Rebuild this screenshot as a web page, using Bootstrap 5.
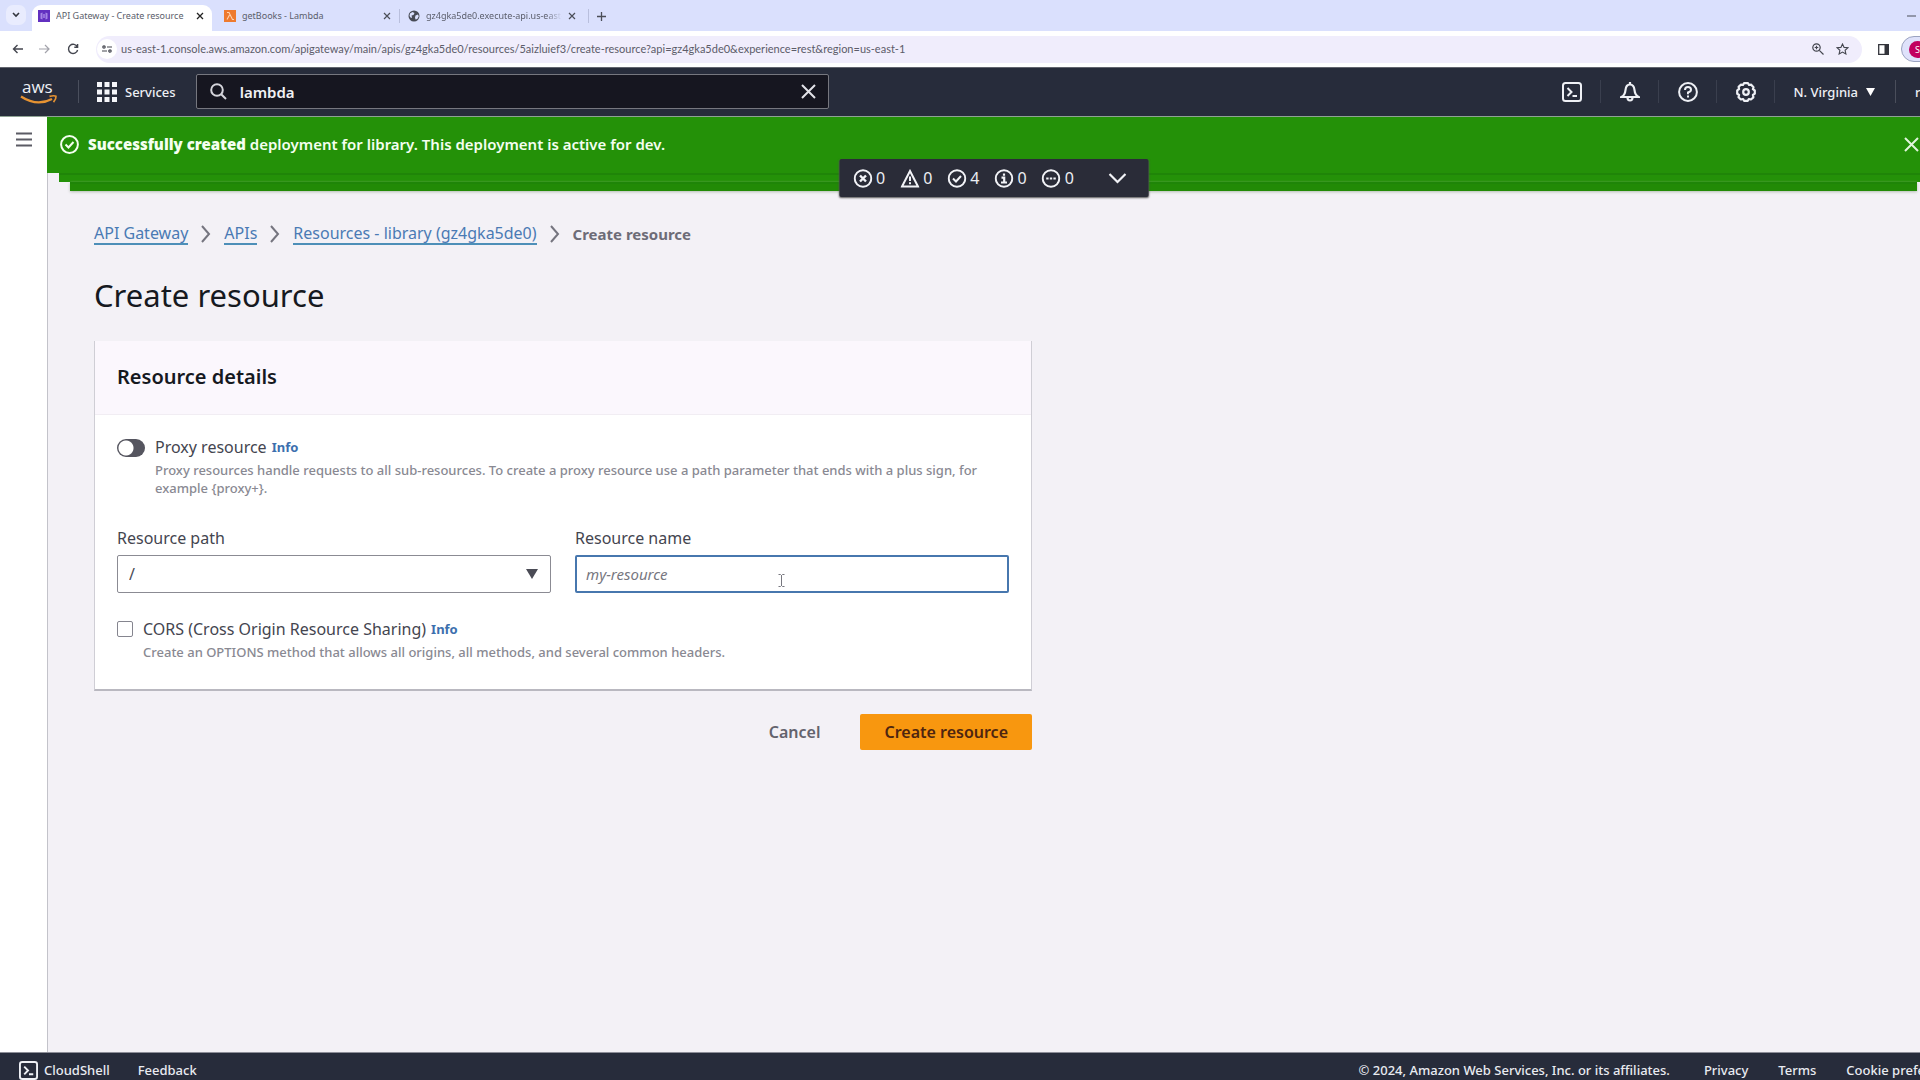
<!DOCTYPE html>
<html lang="en">
<head>
<meta charset="utf-8">
<meta name="viewport" content="width=device-width, initial-scale=1">
<title>API Gateway - Create resource</title>
<link href="https://cdn.jsdelivr.net/npm/bootstrap@5.3.0/dist/css/bootstrap.min.css" rel="stylesheet">
<style>
body { font-family: "Noto Sans", "Open Sans", sans-serif; background: #f3f1f6; color: #16191f; line-height: 20px; }
svg { display: block; flex: none; }
button { color: inherit; }
.icon-btn { background: none; border: 0; padding: 0; display: flex; align-items: center; justify-content: center; }

/* browser frame */
.tab-strip { height: 31px; background: #dae0fd; font-size: 9px; color: #5b5e6b; }
.tab-search { width: 20px; height: 20px; border-radius: 7px; background: #e9ecfe; margin: 5px 6px 0 6px; color: #33363f; }
.tab { height: 26px; margin-top: 5px; padding: 0 8px 4px 6px; gap: 6px; }
.tab a { color: inherit; text-decoration: none; overflow: hidden; white-space: nowrap; }
.tab-active { width: 180px; background: #fff; border-radius: 9px 9px 0 0; }
.tab-lambda { width: 187px; padding-left: 12px; }
.tab-exec { width: 184px; }
.tab-exec a { -webkit-mask-image: linear-gradient(90deg, #000 88%, transparent); mask-image: linear-gradient(90deg, #000 88%, transparent); }
.tab-sep { width: 1px; height: 14px; background: #b9bfdd; }
.tab-end { color: #4b4e58; margin-top: 1px; }
.url-bar { height: 36px; background: #fff; padding: 0 0 0 12px; color: #44464f; }
.url-tools { width: 84px; }
.url-pill { height: 27px; border-radius: 14px; background: #f0edfc; padding: 0 13px 0 1px; gap: 4px; }
.site-info { width: 20px; height: 20px; border-radius: 50%; background: #fff; }
.url-input { border: 0; background: none; outline: 0; padding: 0; font: 11px/20px Lato, sans-serif; color: #5c5c69; }
.profile { width: 32px; height: 26px; border-radius: 13px; border: 1px solid #9ba3c0; background: #dfe2fb; margin-right: -13px; padding-left: 7px; }
.profile span { width: 17px; height: 17px; border-radius: 50%; background: #c2005f; color: #fff; font-size: 9px; line-height: 17px; text-align: center; }

/* console header */
.console-nav { height: 50px; background: #272c3b; border-top: 1px solid #62656e; border-bottom: 1px solid #8fa394; color: #eef0f5; font-size: 13px; font-weight: 500; padding: 0 0 1px 21px; }
.nav-rule { width: 1px; height: 23px; background: #4a4f5d; margin-left: 20px; }
.nav-services { gap: 8px; margin-left: 18px; margin-right: 20px; font-weight: 500; }
.search-box { width: 33vw; height: 35px; background: #161620; border: 1px solid #76777f; border-radius: 2px; padding: 0 12px 0 13px; gap: 13px; }
.search-box input { border: 0; background: none; outline: 0; color: #f1f1f4; font-size: 15px; font-weight: 600; padding: 0; }
.nav-icon { width: 58px; height: 23px; border-right: 1px solid #3a3f4e; }
.nav-region { gap: 8px; padding: 0 20px 0 18px; height: 23px; border-right: 1px solid #4a4e5b; font-weight: 500; }
.nav-account { margin-left: 19px; margin-right: -55px; font-weight: 500; width: 60px; justify-content: flex-start; }

/* work area */
.side-rail { width: 48px; background: #fff; border-right: 1px solid #c3c3ca; padding-top: 15px; }
.work { margin-right: -20px; }
.flash-stack { margin-left: -1px; }
.flash { height: 56px; background: #249108; color: #f4fff0; font-size: 15px; font-weight: 600; padding: 0 21px 2px 13px; gap: 9px; }
.flash-under { height: 9px; background: #249108; border-top: 2px solid #1f8508; }
.under-1 { margin: 0 12px; }
.under-2 { margin: 0 23px; background: #228a06; box-shadow: 0 1px 3px #b4bfb2; }
.flash-count { left: 50%; top: 42px; transform: translateX(-50%); width: 309px; height: 38px; background: #2a2c38; color: #eceef3; border-radius: 2px; font-size: 16px; gap: 15px; padding: 0 22px 0 14px; box-shadow: 0 1px 2px #555; }
.flash-count span { gap: 4px; }

.page-body { padding: 32px 46px 0; }
.crumbs { font-size: 16px; gap: 13px; line-height: 20px; margin-bottom: 30px; }
.crumbs a { color: #4a7ab4; text-decoration: none; border-bottom: 2px solid #4d8fb8; }
.crumbs svg { color: #75757f; }
.crumbs .here { font-size: 15px; font-weight: 700; color: #6d6c77; }
.page-title { font-size: 31px; line-height: 40px; font-weight: 400; margin: 0 0 26px; }
.form-wrap { max-width: 938px; }
.panel { background: #fff; border-left: 1px solid #cfced5; border-right: 1px solid #cfced5; border-bottom: 2px solid #b9b8c0; }
.panel-head { height: 74px; background: #fbf7fd; border-bottom: 1px solid #f1edf3; padding: 0 22px 2px; }
.panel-head h2 { font-size: 20px; line-height: 24px; font-weight: 600; margin: 0; }
.panel-fields { padding: 21px 22px 28px; }
.field-label { font-size: 16px; line-height: 22px; color: #44454f; }
.info-link { font-size: 13px; font-weight: 700; color: #3c6fae; text-decoration: none; margin-left: 5px; }
.hint { font-size: 13px; line-height: 18px; font-weight: 500; color: #898992; margin: 3px 0 0; }
.form-switch .form-check-input.proxy-switch { width: 28px; height: 18px; margin: 3px 0 0; border: 0; border-radius: 9px; background: #55555f radial-gradient(circle at 9px 9px, #fff 7px, transparent 8px) no-repeat; }
input.form-check-input.cors-box { width: 16px; height: 16px; margin: 3px 0 0; border: 1px solid #85858f; border-radius: 2px; flex: none; }
.check-line { gap: 10px; }
.field-row { --bs-gutter-x: 24px; margin-top: 30px; }
.field-row .field-label { display: block; margin-bottom: 6px; }
.form-select.path-select, .form-control.name-input { height: 38px; font-size: 15px; line-height: 20px; border-radius: 2px; padding: 0 11px; color: #4a4b55; }
.form-select.path-select { border: 1px solid #8b8b93; background-image: none; font-size: 16px; }
.form-control.name-input { border: 2px solid #4777ae; box-shadow: none; padding: 0 9px; }
.name-input::placeholder { color: #77777f; font-style: italic; }
.select-arrow { right: 13px; top: 14px; pointer-events: none; }
.text-cursor { left: 203px; top: 19px; pointer-events: none; }
.cors-row { margin-top: 25px; }
.actions { margin-top: 23px; gap: 16px; }
.actions .btn { height: 36px; font-size: 16px; line-height: 20px; font-weight: 600; border: 0; border-radius: 2px; padding: 0 24px; }
.btn-plain { color: #63636d; }
.btn-create, .btn-create:hover { background: #f8970f; color: #4e2510; }

.console-foot { height: 37px; margin-bottom: -9px; background: #272c3b; border-top: 1px solid #8d8e98; color: #e9ebf1; font-size: 13px; font-weight: 500; padding: 0 0 2px 19px; }
.console-foot a, .console-foot button { color: inherit; text-decoration: none; white-space: nowrap; font-weight: 500; }
.console-foot button { gap: 6px; }
.foot-links { gap: 30px; margin-right: -46px; }
</style>
<script src="https://cdn.jsdelivr.net/npm/bootstrap@5.3.0/dist/js/bootstrap.bundle.min.js"></script>
</head>
<body class="vh-100 overflow-hidden d-flex flex-column">

<!-- tabs -->
<div class="tab-strip d-flex flex-shrink-0">
  <button class="icon-btn tab-search" aria-label="Search tabs"><svg width="8" height="6" viewBox="0 0 8 6" fill="none" stroke="currentColor" stroke-width="1.6"><path d="M1 1l3 3 3-3"/></svg></button>
  <div class="tab tab-active d-flex align-items-center">
    <svg width="12" height="12" viewBox="0 0 12 12"><rect width="12" height="12" fill="#6230c0"/><path d="M4.500 2.500L2.500 3.300v5.400l2 .8zM7.500 2.500l2 .8v5.400l-2 .8z" fill="#a685e6"/><path d="M5.500 4v4M6.500 4v4" fill="none" stroke="#b89aee" stroke-width=".6"/></svg>
    <a href="#" class="flex-grow-1">API Gateway - Create resource</a>
    <button class="icon-btn" aria-label="Close tab"><svg width="8" height="8" viewBox="0 0 8 8" stroke="#222" stroke-width="1.300"><path d="M1 1l6 6M7 1L1 7"/></svg></button>
  </div>
  <div class="tab tab-lambda d-flex align-items-center">
    <svg width="12" height="12" viewBox="0 0 12 12"><rect width="12" height="12" fill="#ee7a2e"/><path d="M3 2.500h2L8.500 9.500H10M5.500 5L3 9.500" fill="none" stroke="#ffd3b0" stroke-width="1.100"/></svg>
    <a href="#" class="flex-grow-1">getBooks - Lambda</a>
    <button class="icon-btn" aria-label="Close tab"><svg width="8" height="8" viewBox="0 0 8 8" stroke="#4b4e58" stroke-width="1.200"><path d="M1 1l6 6M7 1L1 7"/></svg></button>
  </div>
  <div class="d-flex align-items-center"><div class="tab-sep"></div></div>
  <div class="tab tab-exec d-flex align-items-center ps-2">
    <svg width="12" height="12" viewBox="0 0 12 12"><circle cx="6" cy="6" r="5.500" fill="#474a55"/><path d="M2 3.500l2.500-1.500 2 1-1 2-2 .5.5 2L3 8 1.500 6zM7.500 5.500l2.500-1 .8 1.800-1.500 2.700-1.800.5-.5-2z" fill="#dae0fd"/></svg>
    <a href="#" class="flex-grow-1">gz4gka5de0.execute-api.us-east-1.amazonaws.com</a>
    <button class="icon-btn" aria-label="Close tab"><svg width="8" height="8" viewBox="0 0 8 8" stroke="#4b4e58" stroke-width="1.200"><path d="M1 1l6 6M7 1L1 7"/></svg></button>
  </div>
  <div class="tab-end d-flex align-items-center flex-grow-1 gap-2">
    <div class="tab-sep ms-1"></div>
    <button class="icon-btn" aria-label="New tab"><svg width="9" height="9" viewBox="0 0 9 9" stroke="currentColor" stroke-width="1.300"><path d="M4.500 0v9M0 4.500h9"/></svg></button>
    <button class="icon-btn ms-auto me-1" aria-label="Minimize"><svg width="9" height="2" viewBox="0 0 9 2"><path d="M0 1h9" stroke="currentColor"/></svg></button>
  </div>
</div>

<!-- address bar -->
<div class="url-bar d-flex align-items-center flex-shrink-0">
  <div class="url-tools d-flex align-items-center gap-3">
    <button class="icon-btn" aria-label="Back"><svg width="11" height="10" viewBox="0 0 11 10" fill="none" stroke="currentColor" stroke-width="1.400"><path d="M11 5H1.500M5.500 1l-4 4 4 4"/></svg></button>
    <button class="icon-btn" aria-label="Forward"><svg width="12" height="10" viewBox="0 0 12 10" fill="none" stroke="#a3a3ab" stroke-width="1.200"><path d="M0 5h10M6 1l4 4-4 4"/></svg></button>
    <button class="icon-btn" aria-label="Reload"><svg width="12" height="12" viewBox="0 0 12 12" fill="none" stroke="currentColor" stroke-width="1.400"><path d="M10.300 4A4.600 4.600 0 1 0 10.600 7M10.600 1v3.300H7.300"/></svg></button>
  </div>
  <div class="url-pill d-flex align-items-center flex-grow-1">
    <button class="icon-btn site-info" aria-label="Site information"><svg width="10" height="8" viewBox="0 0 10 8" fill="none" stroke="currentColor" stroke-width="1.200"><circle cx="2" cy="2" r="1.200"/><path d="M5 2h5M0 6h5"/><circle cx="8" cy="6" r="1.200"/></svg></button>
    <input class="url-input flex-grow-1" type="text" aria-label="Address" value="us-east-1.console.aws.amazon.com/apigateway/main/apis/gz4gka5de0/resources/5aizluief3/create-resource?api=gz4gka5de0&amp;experience=rest&amp;region=us-east-1">
    <button class="icon-btn me-2" aria-label="Zoom"><svg width="12" height="12" viewBox="0 0 12 12" fill="none" stroke="currentColor" stroke-width="1.200"><circle cx="4.500" cy="4.500" r="3.700"/><path d="M7.300 7.300L11.500 11.500M2.700 4.500h3.600M4.500 2.700v3.600"/></svg></button>
    <button class="icon-btn" aria-label="Bookmark"><svg width="13" height="12" viewBox="0 0 13 12" fill="none" stroke="currentColor" stroke-width="1.100"><path d="M6.500 1l1.600 3.400 3.800.4-2.800 2.500.8 3.700-3.400-1.900L3.100 11l.8-3.700L1.100 4.800l3.800-.4z"/></svg></button>
  </div>
  <button class="icon-btn ms-3 me-2" aria-label="Side panel"><svg width="11" height="11" viewBox="0 0 11 11"><path d="M.7.700h9.600v9.600H.7z" fill="none" stroke="#33343b" stroke-width="1.300"/><path d="M6.500 0H11v11H6.500z" fill="#33343b"/></svg></button>
  <div class="profile d-flex align-items-center ms-1"><span>S</span></div>
</div>

<!-- console header -->
<header class="console-nav d-flex align-items-center flex-shrink-0">
  <a href="#" aria-label="AWS" class="text-decoration-none">
    <svg class="overflow-visible" width="37" height="26" viewBox="0 0 37 26" font-family="Open Sans, sans-serif"><text x="1" y="14" font-size="17" font-weight="500" fill="#eef0f5">aws</text><path d="M0 17.500Q16 28 31 20" fill="none" stroke="#e79332" stroke-width="2.300"/><path d="M28.500 17.400q4.500-1.200 6.500-.2.300 3-2.500 6" fill="none" stroke="#e79332" stroke-width="1.700"/></svg>
  </a>
  <div class="nav-rule"></div>
  <button class="icon-btn nav-services">
    <svg width="20" height="20" viewBox="0 0 20 20" fill="#f5f6fa"><path d="M0 0h5v5H0zM7.500 0h5v5h-5zM15 0h5v5h-5zM0 7.500h5v5H0zM7.500 7.500h5v5h-5zM15 7.500h5v5h-5zM0 15h5v5H0zM7.500 15h5v5h-5zM15 15h5v5h-5z"/></svg>
    Services
  </button>
  <div class="search-box d-flex align-items-center">
    <svg width="17" height="17" viewBox="0 0 17 17" fill="none" stroke="#d5d5db" stroke-width="2"><circle cx="7" cy="7" r="5.800"/><path d="M11.200 11.200L16 16"/></svg>
    <input class="flex-grow-1" type="text" aria-label="Search services" value="lambda">
    <button class="icon-btn" aria-label="Clear search"><svg width="15" height="15" viewBox="0 0 15 15" stroke="#e2e2e8" stroke-width="2"><path d="M1 1l13 13M14 1L1 14"/></svg></button>
  </div>
  <div class="d-flex align-items-center ms-auto">
    <button class="icon-btn nav-icon" aria-label="CloudShell"><svg width="20" height="20" viewBox="0 0 20 20" fill="none" stroke="#eef0f5" stroke-width="2"><rect x="1" y="1" width="18" height="18" rx="2.500"/><path d="M5.500 6l4 4-4 4M10.500 14h4.500"/></svg></button>
    <button class="icon-btn nav-icon" aria-label="Notifications"><svg width="20" height="20" viewBox="0 0 20 20" fill="none" stroke="#eef0f5" stroke-width="2.200"><path d="M1.500 15q3.500-2 4-7Q6 2.500 10 2.500T14.500 8q.5 5 4 7zM10 0v3"/><path d="M7.500 15.500q0 3 2.500 3t2.500-3"/></svg></button>
    <button class="icon-btn nav-icon" aria-label="Help"><svg width="20" height="20" viewBox="0 0 20 20" fill="none" stroke="#eef0f5" stroke-width="2"><circle cx="10" cy="10" r="8.900"/><path d="M7 8q0-3 3-3t3 2.700Q13 9.500 10 10.500V12.200M10 13.600v2"/></svg></button>
    <button class="icon-btn nav-icon" aria-label="Settings"><svg width="20" height="20" viewBox="0 0 20 20" fill="none" stroke="#eef0f5" stroke-width="2.200" stroke-linejoin="round"><path d="M8 1.200h4l1 1.800 2.200-.3 2.300 2.500-.6 2 1.900 1.300v3.200L16.900 13l.5 2.300-2.500 2.200-2.100-.5-1 1.800H8.100l-1-1.800-2.200.5-2.400-2.300.6-2.200-1.900-1.200V8.300L3.100 7l-.5-2.200L5 2.600l2 .4z"/><circle cx="10" cy="10" r="2.800"/></svg></button>
    <button class="icon-btn nav-region">N. Virginia <svg width="9" height="8" viewBox="0 0 9 8"><path d="M0 0h9L4.500 8z" fill="#fff"/></svg></button>
    <button class="icon-btn nav-account">root</button>
  </div>
</header>

<div class="d-flex flex-grow-1">
  <nav class="side-rail flex-shrink-0" aria-label="Side navigation">
    <button class="icon-btn mx-auto" aria-label="Open navigation"><svg width="16" height="15" viewBox="0 0 16 15" stroke="#5b5b64" stroke-width="2"><path d="M0 1.500h16M0 7.500h16M0 13.500h16"/></svg></button>
  </nav>

  <main class="work flex-grow-1">
    <div class="flash-stack position-relative">
      <div class="flash d-flex align-items-center" role="status">
        <svg width="19" height="19" viewBox="0 0 19 19" fill="none" stroke="#f4fff0" stroke-width="2"><circle cx="9.500" cy="9.500" r="8.400"/><path d="M5.500 9.500l3 3 5-5.500"/></svg>
        <span><b>Successfully created</b> deployment for library. This deployment is active for dev.</span>
        <button class="icon-btn ms-auto" aria-label="Dismiss"><svg width="15" height="15" viewBox="0 0 15 15" stroke="#e2f5dc" stroke-width="2"><path d="M1 1l13 13M14 1L1 14"/></svg></button>
      </div>
      <div class="flash-under under-1"></div>
      <div class="flash-under under-2"></div>
      <button class="flash-count icon-btn position-absolute d-flex align-items-center justify-content-start" aria-label="Expand notifications">
        <span class="d-flex align-items-center"><svg width="19" height="19" viewBox="0 0 19 19" fill="none" stroke="#f2f3f7" stroke-width="2"><circle cx="9.500" cy="9.500" r="8.300"/><path d="M6.500 6.500l6 6M12.500 6.500l-6 6" stroke-width="2.400"/></svg>0</span>
        <span class="d-flex align-items-center"><svg width="19" height="19" viewBox="0 0 19 19" fill="none" stroke="#f2f3f7" stroke-width="2"><path d="M9.500 2L17.500 17.500h-16zM9.500 7.500v4.500M9.500 13.200v2"/></svg>0</span>
        <span class="d-flex align-items-center"><svg width="19" height="19" viewBox="0 0 19 19" fill="none" stroke="#f2f3f7" stroke-width="2"><circle cx="9.500" cy="9.500" r="8.300"/><path d="M5.500 9.500l3 3 5-5.500"/></svg>4</span>
        <span class="d-flex align-items-center"><svg width="19" height="19" viewBox="0 0 19 19" fill="none" stroke="#f2f3f7" stroke-width="2"><circle cx="9.500" cy="9.500" r="8.300"/><path d="M9.500 4.500v2.200M7 8.700h2.700v5M6.500 13.500h6" stroke-width="2.200"/></svg>0</span>
        <span class="d-flex align-items-center"><svg width="19" height="19" viewBox="0 0 19 19" fill="none" stroke="#f2f3f7" stroke-width="2"><circle cx="9.500" cy="9.500" r="8.300"/><path d="M4.700 9.500h2.400M8.300 9.500h2.400M11.900 9.500h2.400" stroke-width="2.200"/></svg>0</span>
        <svg class="ms-auto" width="18" height="11" viewBox="0 0 18 11" fill="none" stroke="#f2f3f7" stroke-width="2.200"><path d="M1 1l8 8 8-8"/></svg>
      </button>
    </div>

    <div class="page-body">
      <nav class="crumbs d-flex align-items-center" aria-label="Breadcrumb">
        <a href="#">API Gateway</a>
        <svg width="10" height="18" viewBox="0 0 10 18" fill="none" stroke="currentColor" stroke-width="2"><path d="M1 1l7 8-7 8"/></svg>
        <a href="#">APIs</a>
        <svg width="10" height="18" viewBox="0 0 10 18" fill="none" stroke="currentColor" stroke-width="2"><path d="M1 1l7 8-7 8"/></svg>
        <a href="#">Resources - library (gz4gka5de0)</a>
        <svg width="10" height="18" viewBox="0 0 10 18" fill="none" stroke="currentColor" stroke-width="2"><path d="M1 1l7 8-7 8"/></svg>
        <span class="here" aria-current="page">Create resource</span>
      </nav>
      <h1 class="page-title">Create resource</h1>

      <form class="form-wrap" onsubmit="return false">
        <section class="panel">
          <div class="panel-head d-flex align-items-center"><h2>Resource details</h2></div>
          <div class="panel-fields">
            <div class="check-line form-switch d-flex p-0 m-0">
              <input class="form-check-input proxy-switch flex-shrink-0 float-none" type="checkbox" role="switch" id="proxy">
              <div>
                <div class="d-flex align-items-center"><label class="field-label" for="proxy">Proxy resource</label><a class="info-link" href="#">Info</a></div>
                <p class="hint">Proxy resources handle requests to all sub-resources. To create a proxy resource use a path parameter that ends with a plus sign, for example {proxy+}.</p>
              </div>
            </div>
            <div class="row field-row">
              <div class="col-6">
                <label class="field-label" for="path">Resource path</label>
                <div class="position-relative">
                  <select class="form-select path-select" id="path"><option>/</option></select>
                  <svg class="select-arrow position-absolute" width="12" height="10" viewBox="0 0 12 10"><path d="M0 0h12L6 10z" fill="#4a4b55"/></svg>
                </div>
              </div>
              <div class="col-6">
                <label class="field-label" for="resname">Resource name</label>
                <div class="position-relative">
                  <input class="form-control name-input" type="text" id="resname" placeholder="my-resource">
                  <svg class="text-cursor position-absolute" width="7" height="13" viewBox="0 0 7 13" fill="none" stroke="#77777f"><path d="M.5.500h2l1 1 1-1h2M3.500 1v11M.5 12.500h2l1-1 1 1h2"/></svg>
                </div>
              </div>
            </div>
            <div class="check-line cors-row d-flex">
              <input class="form-check-input cors-box" type="checkbox" id="cors">
              <div>
                <div class="d-flex align-items-center"><label class="field-label" for="cors">CORS (Cross Origin Resource Sharing)</label><a class="info-link" href="#">Info</a></div>
                <p class="hint">Create an OPTIONS method that allows all origins, all methods, and several common headers.</p>
              </div>
            </div>
          </div>
        </section>
        <div class="actions d-flex justify-content-end">
          <button type="button" class="btn btn-plain">Cancel</button>
          <button type="submit" class="btn btn-create">Create resource</button>
        </div>
      </form>
    </div>
  </main>
</div>

<footer class="console-foot d-flex align-items-center flex-shrink-0">
  <button class="icon-btn"><svg width="19" height="19" viewBox="0 0 20 20" fill="none" stroke="#eef0f5" stroke-width="2"><rect x="1" y="1" width="18" height="18" rx="2.500"/><path d="M5.500 6l4 4-4 4M10.500 14h4.500"/></svg>CloudShell</button>
  <a href="#" class="ms-4 ps-1">Feedback</a>
  <div class="foot-links d-flex ms-auto">
    <span>© 2024, Amazon Web Services, Inc. or its affiliates.</span>
    <a href="#" class="ps-1">Privacy</a>
    <a href="#">Terms</a>
    <a href="#">Cookie preferences</a>
  </div>
</footer>
</body>
</html>
